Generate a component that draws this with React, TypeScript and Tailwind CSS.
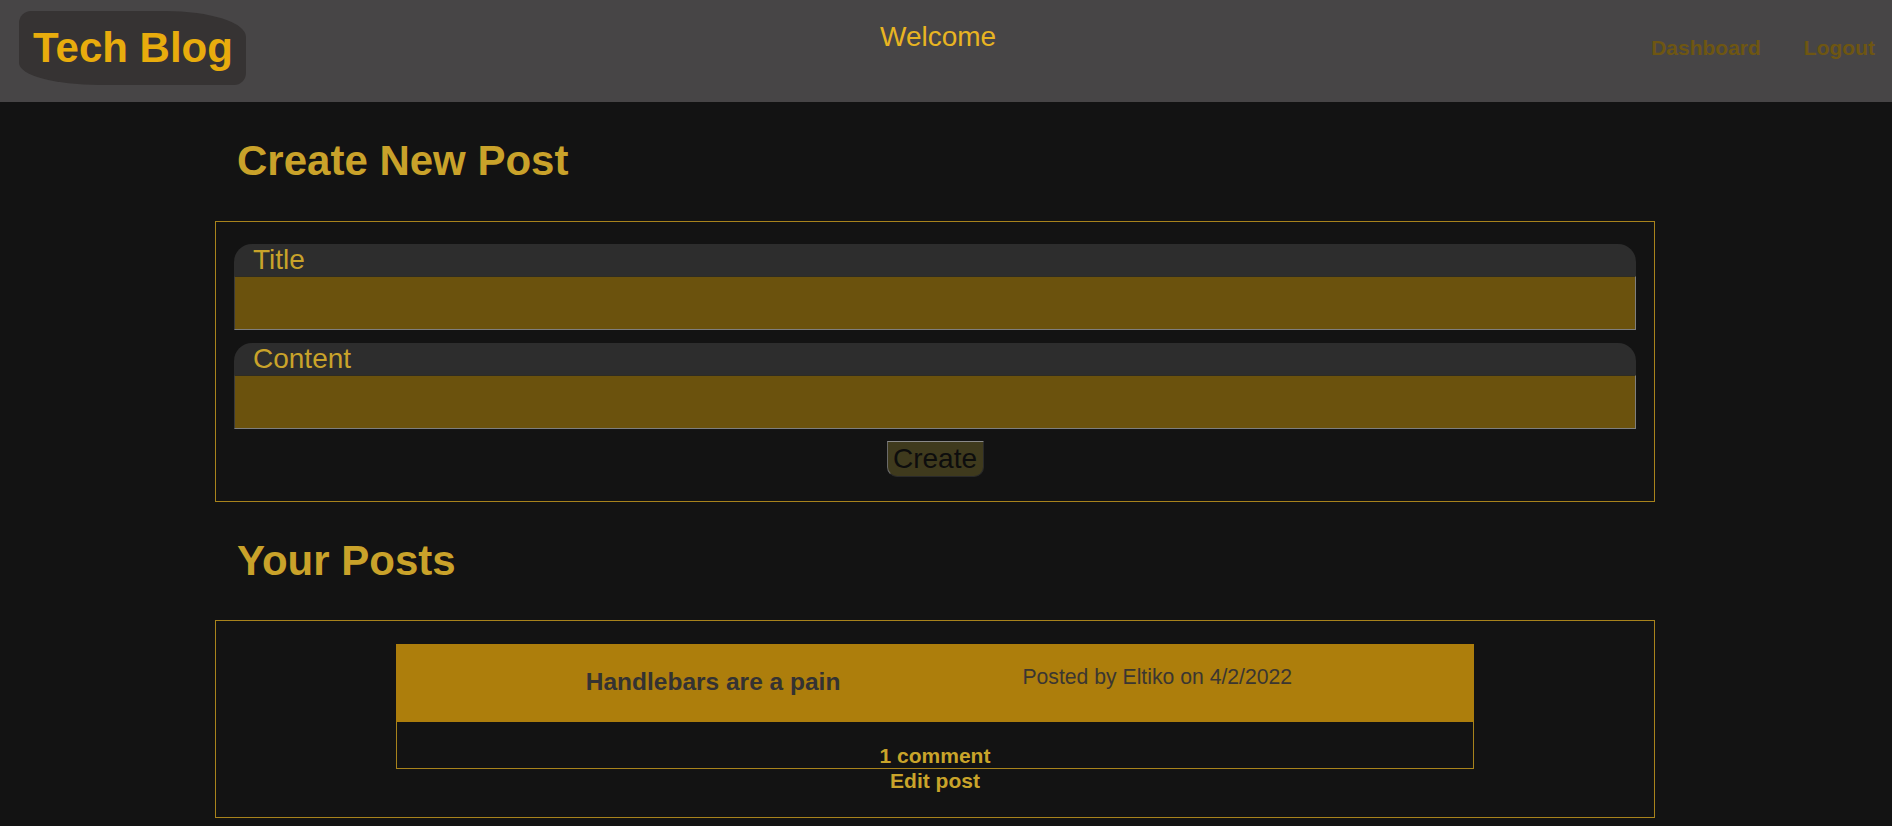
import React from "react";

function Field({ label }: { label: string }) {
  return (
    <div className="flex flex-col">
      <div className="h-[32px] rounded-t-[18px] bg-[#2d2d2d] pl-[19px] text-[28px] leading-[32px] text-[#c9a32a]">
        {label}
      </div>
      <div className="h-[54px] border border-t-[#2e2c22] border-l-[#3a3a3a] border-b-[#7e7e7e] border-r-[#7e7e7e] bg-[#6b520d]" />
    </div>
  );
}

export default function App() {
  return (
    <div className="min-h-[826px] bg-[#131313] font-['Liberation_Sans',Arial,sans-serif]">
      <header className="flex h-[102px] items-start bg-[#474546]">
        <div className="ml-[19px] mt-[11px] flex h-[74px] w-[227px] items-center rounded-[12px_80px_12px_80px/12px_26px_12px_22px] bg-[#363333] pl-[14px]">
          <span className="text-[42px] font-bold leading-none text-[#e8ac0d]">Tech Blog</span>
        </div>
        <div className="flex-1 pr-[21px] pt-[23px] text-center text-[28px] leading-none text-[#e8b422]">
          Welcome
        </div>
        <nav className="flex gap-[43px] pr-[17px] pt-[37px] text-[21px] font-bold leading-none text-[#6e5612]">
          <span>Dashboard</span>
          <span>Logout</span>
        </nav>
      </header>

      <main className="ml-[215px] w-[1440px]">
        <h1 className="mb-[39px] pl-[22px] pt-[38px] text-[42px] font-bold leading-[42px] text-[#c9a22a]">
          Create New Post
        </h1>
        <section className="flex flex-col border border-[#a8831c] px-[18px] pb-[24px] pt-[22px]">
          <div className="flex flex-col gap-[13px]">
            <Field label="Title" />
            <Field label="Content" />
          </div>
          <div className="mt-[12px] flex justify-center">
            <button className="h-[36px] w-[97px] rounded-b-[10px] border border-t-[#8a8a8a] border-l-[#6a6a6a] border-b-[#2a2a2a] border-r-[#2a2a2a] bg-[#3f3a1d] text-center text-[28px] leading-[34px] text-[#0d0d0d]">
              Create
            </button>
          </div>
        </section>

        <h1 className="mb-[38px] pl-[22px] pt-[38px] text-[42px] font-bold leading-[42px] text-[#c9a22a]">
          Your Posts
        </h1>
        <section className="border border-[#a8831c] pb-[24px] pt-[23px]">
          <div className="mx-auto w-3/4">
            <div className="flex h-[78px] items-start bg-[#ad7e0c] pl-[190px]">
              <span className="mt-[26px] text-[24.5px] font-bold leading-none text-[#343232]">
                Handlebars are a pain
              </span>
              <span className="ml-[182px] mt-[22px] text-[21.2px] leading-none text-[#3b3631]">
                Posted by Eltiko on 4/2/2022
              </span>
            </div>
            <div className="border-x border-b border-[#a8831c] pt-[22px] text-center text-[21px] font-bold leading-[24px] text-[#c9a42a]">
              1 comment
            </div>
          </div>
          <div className="text-center text-[21px] font-bold leading-[24px] text-[#c9a42a]">Edit post</div>
        </section>
      </main>
    </div>
  );
}
